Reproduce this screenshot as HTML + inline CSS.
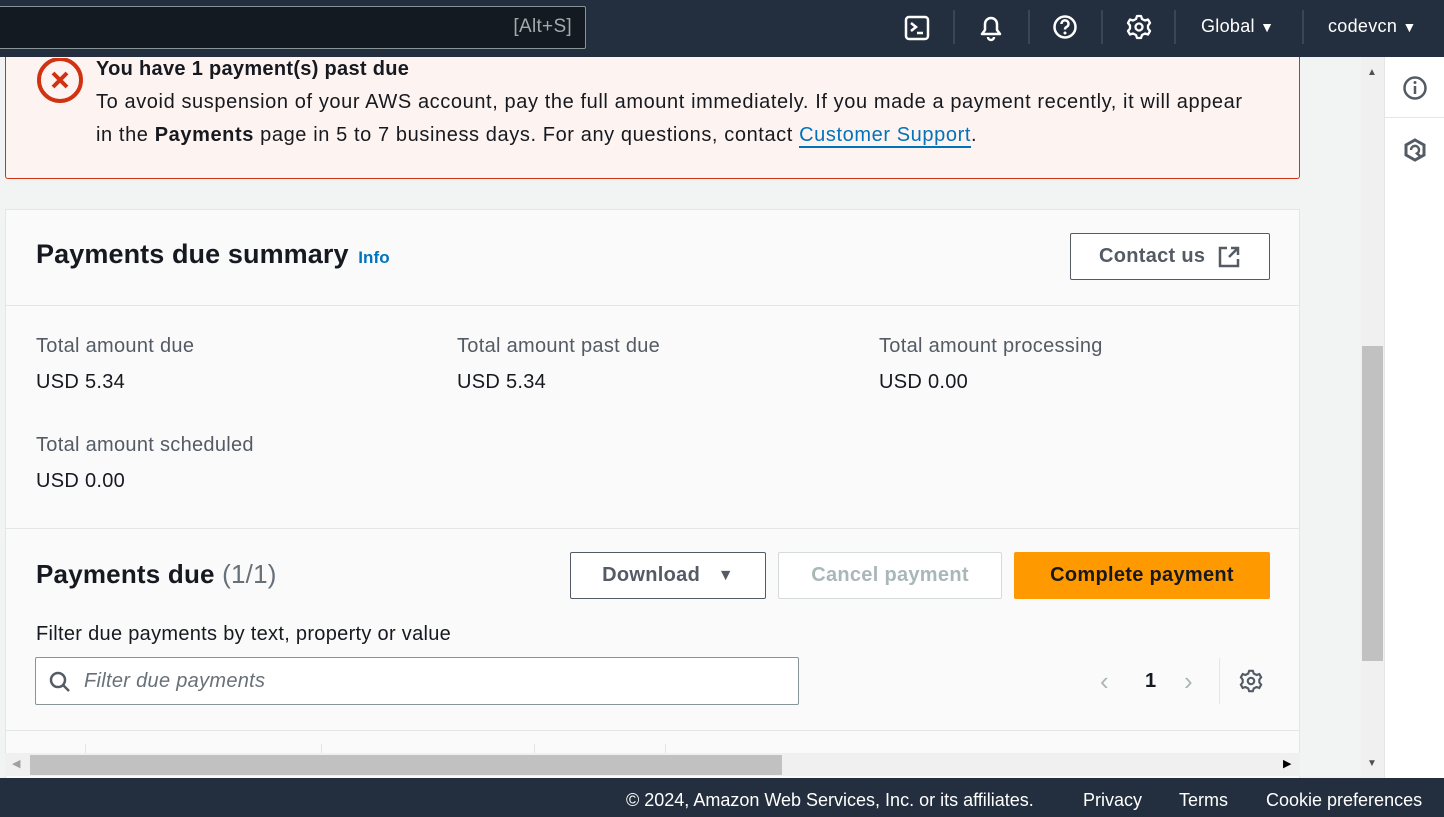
<!DOCTYPE html>
<html><head><meta charset="utf-8"><style>
*{box-sizing:border-box;margin:0;padding:0}
body{width:1444px;height:817px;overflow:hidden;background:#f2f3f3;font-family:"Liberation Sans",sans-serif;color:#16191f;position:relative;letter-spacing:0.3px}
.abs{position:absolute}
.top{left:0;top:0;width:1444px;height:57px;background:#232f3e}
.search{left:-2px;top:6px;width:588px;height:43px;border:1px solid #879596;border-radius:2px;background:#141a22}
.sep{top:10px;width:2px;height:34px;background:#3b4654}
.w{color:#fff;font-size:18px}
.banner{left:5px;top:57px;width:1295px;height:122px;background:#fdf3f1;border:1px solid #d13212;border-top:none;border-radius:0 0 3px 3px}
.card{left:5px;top:209px;width:1295px;height:580px;background:#fafafa;border:1px solid #e4e6e6;border-bottom:none}
.t19{font-size:20px}
.lbl{font-size:20px;color:#545b64}
.btn{border:1px solid #545b64;border-radius:2px;background:#fff;font-weight:bold;font-size:20px;color:#545b64;display:flex;align-items:center;justify-content:center}
</style></head><body>
<div class="abs banner"></div>
<div class="abs top"></div>
<div class="abs search"><span class="abs" style="right:13px;top:9px;color:#a4a9ad;font-size:19px">[Alt+S]</span></div>
<svg class="abs" style="left:904px;top:15px" width="26" height="26" viewBox="0 0 26 26"><rect x="2" y="2" width="22" height="22" rx="3" fill="none" stroke="#fff" stroke-width="2.5"/><path d="M7 8l5 4-5 4M13 18h6" stroke="#fff" stroke-width="2.5" fill="none"/></svg>
<div class="abs sep" style="left:953px"></div>
<svg class="abs" style="left:978px;top:14px" width="26" height="28" viewBox="0 0 26 28"><path d="M4 20h18l-3-4v-6a6 6 0 0 0-12 0v6z" fill="none" stroke="#fff" stroke-width="2.5" stroke-linejoin="round"/><path d="M10 23a3 3 0 0 0 6 0" fill="none" stroke="#fff" stroke-width="2.5"/></svg>
<div class="abs sep" style="left:1028px"></div>
<svg class="abs" style="left:1052px;top:14px" width="26" height="26" viewBox="0 0 26 26"><circle cx="13" cy="13" r="10.5" fill="none" stroke="#fff" stroke-width="2.5"/><path d="M9.5 10a3.5 3.5 0 1 1 5 3c-1.2.6-1.5 1.3-1.5 2.5" fill="none" stroke="#fff" stroke-width="2.5"/><circle cx="13" cy="19" r="1.5" fill="#fff"/></svg>
<div class="abs sep" style="left:1101px"></div>
<svg class="abs" style="left:1126px;top:14px" width="26" height="26" viewBox="0 0 26 26"><path d="M11 2h4l1 3 3 1.5 3-1 2 3.5-2 2.5v3l2 2.5-2 3.5-3-1-3 1.5-1 3h-4l-1-3-3-1.5-3 1-2-3.5 2-2.5v-3l-2-2.5 2-3.5 3 1 3-1.5z" fill="none" stroke="#fff" stroke-width="2.3" stroke-linejoin="round"/><circle cx="13" cy="13" r="3.5" fill="none" stroke="#fff" stroke-width="2.3"/></svg>
<div class="abs sep" style="left:1174px"></div>
<div class="abs w" style="left:1201px;top:16px">Global <span style="font-size:14px">▼</span></div>
<div class="abs sep" style="left:1302px"></div>
<div class="abs w" style="left:1328px;top:16px">codevcn <span style="font-size:14px">▼</span></div>

<div class="abs" style="left:1384px;top:57px;width:60px;height:721px;background:#fff;border-left:1px solid #e4e6e6"></div>
<div class="abs" style="left:1384px;top:117px;width:60px;height:1px;background:#e4e6e6"></div>
<svg class="abs" style="left:1402px;top:75px" width="26" height="26" viewBox="0 0 26 26"><circle cx="13" cy="13" r="10.5" fill="none" stroke="#545b64" stroke-width="2.5"/><path d="M13 11v8" stroke="#545b64" stroke-width="2.5"/><circle cx="13" cy="7.5" r="1.5" fill="#545b64"/></svg>
<svg class="abs" style="left:1402px;top:137px" width="26" height="26" viewBox="0 0 26 26"><path d="M13 3l9 5v10l-9 5-9-5V8z" fill="none" stroke="#545b64" stroke-width="3"/><path d="M9 13a4 4 0 1 1 6 3.4L18 19" fill="none" stroke="#545b64" stroke-width="2.5"/></svg>

<div class="abs" style="left:1361px;top:57px;width:23px;height:721px;background:#f0f0f0"></div>
<div class="abs" style="left:1362px;top:346px;width:21px;height:315px;background:#c1c1c1"></div>
<div class="abs" style="left:1367px;top:67px;font-size:10px;color:#505050">▲</div>
<div class="abs" style="left:1367px;top:758px;font-size:10px;color:#505050">▼</div>

<svg class="abs" style="left:36px;top:58px" width="48" height="46" viewBox="0 0 48 46"><circle cx="24" cy="22" r="21" fill="none" stroke="#d13212" stroke-width="4"/><path d="M17 15l14 14M31 15l-14 14" stroke="#d13212" stroke-width="4"/></svg>
<div class="abs" style="left:96px;top:58px;font-size:20px;font-weight:bold">You have 1 payment(s) past due</div>
<div class="abs t19" style="left:96px;top:86px;width:1166px;line-height:33px;letter-spacing:0.6px">To avoid suspension of your AWS account, pay the full amount immediately. If you made a payment recently, it will appear in the <b>Payments</b> page in 5 to 7 business days. For any questions, contact <span style="color:#0073bb;border-bottom:2px solid #0073bb">Customer Support</span>.</div>

<div class="abs card"></div>
<div class="abs" style="left:6px;top:305px;width:1293px;height:1px;background:#e4e6e6"></div>
<div class="abs" style="left:6px;top:528px;width:1293px;height:1px;background:#e4e6e6"></div>
<div class="abs" style="left:6px;top:730px;width:1293px;height:1px;background:#e4e6e6"></div>
<div class="abs" style="left:36px;top:239px;font-size:27px;font-weight:bold;letter-spacing:0.1px">Payments due summary <span style="font-size:17px;color:#0073bb;margin-left:2px">Info</span></div>
<div class="abs btn" style="left:1070px;top:233px;width:200px;height:47px">Contact us&nbsp;&nbsp;<svg width="24" height="24" viewBox="0 0 24 24"><path d="M10 3H3v18h18v-7M14 3h7v7M21 3l-9 9" fill="none" stroke="#545b64" stroke-width="2.5"/></svg></div>
<div class="abs lbl" style="left:36px;top:335px">Total amount due</div>
<div class="abs t19" style="left:36px;top:371px">USD 5.34</div>
<div class="abs lbl" style="left:457px;top:335px">Total amount past due</div>
<div class="abs t19" style="left:457px;top:371px">USD 5.34</div>
<div class="abs lbl" style="left:879px;top:335px">Total amount processing</div>
<div class="abs t19" style="left:879px;top:371px">USD 0.00</div>
<div class="abs lbl" style="left:36px;top:434px">Total amount scheduled</div>
<div class="abs t19" style="left:36px;top:470px">USD 0.00</div>

<div class="abs" style="left:36px;top:559px;font-size:26px;font-weight:bold;letter-spacing:0.2px">Payments due <span style="font-weight:normal;color:#687078">(1/1)</span></div>
<div class="abs btn" style="left:570px;top:552px;width:196px;height:47px">Download&nbsp;&nbsp;&nbsp;<span style="font-size:16px">▼</span></div>
<div class="abs btn" style="left:778px;top:552px;width:224px;height:47px;border-color:#d5dbdb;color:#aab7b8">Cancel payment</div>
<div class="abs btn" style="left:1014px;top:552px;width:256px;height:47px;background:#ff9900;border-color:#ff9900;color:#16191f">Complete payment</div>
<div class="abs t19" style="left:36px;top:623px">Filter due payments by text, property or value</div>
<div class="abs" style="left:35px;top:657px;width:764px;height:48px;background:#fff;border:1px solid #879596;border-radius:2px"></div>
<svg class="abs" style="left:48px;top:670px" width="24" height="24" viewBox="0 0 24 24"><circle cx="10" cy="10" r="7" fill="none" stroke="#545b64" stroke-width="2.5"/><path d="M15 15l6 6" stroke="#545b64" stroke-width="2.5"/></svg>
<div class="abs" style="left:84px;top:670px;font-size:20px;font-style:italic;color:#687078">Filter due payments</div>
<div class="abs" style="left:1100px;top:666px;font-size:26px;color:#aab7b8">‹</div>
<div class="abs" style="left:1145px;top:670px;font-size:20px;font-weight:bold">1</div>
<div class="abs" style="left:1184px;top:666px;font-size:26px;color:#aab7b8">›</div>
<div class="abs" style="left:1219px;top:658px;width:1px;height:46px;background:#e4e6e6"></div>
<svg class="abs" style="left:1239px;top:669px" width="24" height="24" viewBox="0 0 26 26"><path d="M11 2h4l1 3 3 1.5 3-1 2 3.5-2 2.5v3l2 2.5-2 3.5-3-1-3 1.5-1 3h-4l-1-3-3-1.5-3 1-2-3.5 2-2.5v-3l-2-2.5 2-3.5 3 1 3-1.5z" fill="none" stroke="#545b64" stroke-width="2.3"/><circle cx="13" cy="13" r="3.5" fill="none" stroke="#545b64" stroke-width="2.3"/></svg>
<div class="abs" style="left:85px;top:744px;width:1px;height:10px;background:#e4e6e6"></div>
<div class="abs" style="left:321px;top:744px;width:1px;height:10px;background:#e4e6e6"></div>
<div class="abs" style="left:534px;top:744px;width:1px;height:10px;background:#e4e6e6"></div>
<div class="abs" style="left:665px;top:744px;width:1px;height:10px;background:#e4e6e6"></div>

<div class="abs" style="left:5px;top:753px;width:1295px;height:23px;background:#f0f0f0"></div>
<div class="abs" style="left:30px;top:755px;width:752px;height:20px;background:#c1c1c1"></div>
<div class="abs" style="left:12px;top:757px;font-size:11px;color:#a0a0a0">◀</div>
<div class="abs" style="left:1283px;top:757px;font-size:11px;color:#000">▶</div>

<div class="abs" style="left:0;top:778px;width:1444px;height:39px;background:#232f3e"></div>
<div class="abs" style="left:626px;top:790px;color:#fff;font-size:18px;letter-spacing:0">© 2024, Amazon Web Services, Inc. or its affiliates.</div>
<div class="abs" style="left:1083px;top:790px;color:#fff;font-size:18px;letter-spacing:0">Privacy</div>
<div class="abs" style="left:1179px;top:790px;color:#fff;font-size:18px;letter-spacing:0">Terms</div>
<div class="abs" style="left:1266px;top:790px;color:#fff;font-size:18px;letter-spacing:0">Cookie preferences</div>
</body></html>
